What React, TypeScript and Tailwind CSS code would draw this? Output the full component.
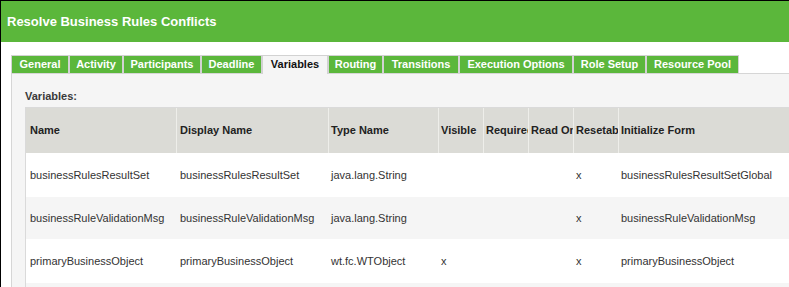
import React from 'react';

interface Tab {
  label: string;
  width: string;
  active?: boolean;
}

interface VariableRow {
  name: string;
  displayName: string;
  typeName: string;
  visible: boolean;
  required: boolean;
  readOnly: boolean;
  resetable: boolean;
  initializeFrom: string;
}

const tabs: Tab[] = [
  { label: 'General', width: 'w-[58px]' },
  { label: 'Activity', width: 'w-[54px]' },
  { label: 'Participants', width: 'w-[78px]' },
  { label: 'Deadline', width: 'w-[61px]' },
  { label: 'Variables', width: 'w-[66px]', active: true },
  { label: 'Routing', width: 'w-[55px]' },
  { label: 'Transitions', width: 'w-[76px]' },
  { label: 'Execution Options', width: 'w-[114px]' },
  { label: 'Role Setup', width: 'w-[73px]' },
  { label: 'Resource Pool', width: 'w-[93px]' },
];

const rows: VariableRow[] = [
  {
    name: 'businessRulesResultSet',
    displayName: 'businessRulesResultSet',
    typeName: 'java.lang.String',
    visible: false,
    required: false,
    readOnly: false,
    resetable: true,
    initializeFrom: 'businessRulesResultSetGlobal',
  },
  {
    name: 'businessRuleValidationMsg',
    displayName: 'businessRuleValidationMsg',
    typeName: 'java.lang.String',
    visible: false,
    required: false,
    readOnly: false,
    resetable: true,
    initializeFrom: 'businessRuleValidationMsg',
  },
  {
    name: 'primaryBusinessObject',
    displayName: 'primaryBusinessObject',
    typeName: 'wt.fc.WTObject',
    visible: true,
    required: false,
    readOnly: false,
    resetable: true,
    initializeFrom: 'primaryBusinessObject',
  },
];

// column widths include the 1px separator on the right
const cols = ['w-[151px] pl-[4px]', 'w-[152px] pl-[3px]', 'w-[110px] pl-[2px]', 'w-[45px] pl-[2px]', 'w-[45px] pl-[2px]', 'w-[45px] pl-[2px]', 'w-[45px] pl-[2px]', 'w-[240px] pl-[2px]'];
const headers = ['Name', 'Display Name', 'Type Name', 'Visible', 'Required', 'Read Only', 'Resetable', 'Initialize Form'];
const rowHeights = ['h-[44px]', 'h-[42px]', 'h-[44px]'];

export default function App() {
  return (
    <div className="w-[789px] h-[287px] overflow-hidden bg-white border-t border-l border-black font-['Liberation_Sans',Arial,sans-serif]">
      {/* title bar */}
      <div className="h-[41px] bg-[#5bb73b] flex items-center pl-[6px]">
        <h1 className="text-white font-bold text-[13px]">Resolve Business Rules Conflicts</h1>
      </div>

      <div className="ml-[10px] mt-[13px] w-[820px]">
        {/* tabs */}
        <div className="flex items-start">
          {tabs.map((tab) => (
            <div
              key={tab.label}
              className={
                tab.active
                  ? `${tab.width} h-[19px] -mb-px relative z-10 flex items-center justify-center pb-px border-t border-x border-[#d2d2d2] bg-[#f5f5f5] text-[#111] text-[11px] font-bold whitespace-nowrap`
                  : `${tab.width} h-[18px] flex items-center justify-center border-t border-x border-[#d2d2d2] bg-[#5bb73b] text-white text-[11px] font-bold whitespace-nowrap`
              }
            >
              {tab.label}
            </div>
          ))}
        </div>

        {/* panel */}
        <div className="border-t border-l border-[#d6d6d6] bg-[#f5f5f5] pl-[13px] pt-[15px] h-[230px]">
          <div className="text-[11px] leading-[14px] font-bold text-[#3a3a3a] mb-[4px]">Variables:</div>

          <div className="border-t border-l border-[#dadada] w-[900px]">
            <div className="flex h-[45px] bg-[#dbdbd6]">
              {headers.map((h, i) => (
                <div
                  key={h}
                  className={`${cols[i]} pr-0 flex items-center overflow-hidden whitespace-nowrap border-r border-[#eeeeea] text-[11px] font-bold text-[#222]`}
                >
                  {h}
                </div>
              ))}
            </div>

            {rows.map((row, r) => {
              const cells = [
                row.name,
                row.displayName,
                row.typeName,
                row.visible ? 'x' : '',
                row.required ? 'x' : '',
                row.readOnly ? 'x' : '',
                row.resetable ? 'x' : '',
                row.initializeFrom,
              ];
              return (
                <div key={row.name} className={`flex ${rowHeights[r]} ${r % 2 === 1 ? 'bg-[#f5f5f5]' : 'bg-white'}`}>
                  {cells.map((c, i) => (
                    <div
                      key={i}
                      className={`${cols[i]} flex items-center overflow-hidden whitespace-nowrap text-[11px] text-[#333]`}
                    >
                      {c}
                    </div>
                  ))}
                </div>
              );
            })}

            <div className="h-[44px] bg-[#f5f5f5]" />
          </div>
        </div>
      </div>
    </div>
  );
}
